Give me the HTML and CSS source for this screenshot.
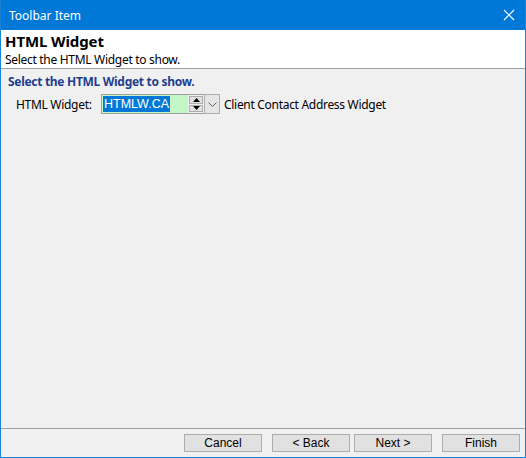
FILE: index.html
```html
<!DOCTYPE html>
<html lang="en">
<head>
    <meta charset="UTF-8">
    <title>Toolbar Item</title>
    <link rel="stylesheet" href="styles.css">
</head>
<body>
    <div class="window">
        <div class="titlebar">
            <span class="title">Toolbar Item</span>
            <svg class="close" width="12" height="12" viewBox="0 0 12 12">
                <path d="M1 1 L11 11 M11 1 L1 11" stroke="#fff" stroke-width="1.2" fill="none"/>
            </svg>
        </div>

        <div class="header">
            <h1>HTML Widget</h1>
            <p>Select the HTML Widget to show.</p>
        </div>

        <div class="content">
            <h2>Select the HTML Widget to show.</h2>
            <div class="field-row">
                <label>HTML Widget:</label>
                <div class="combo">
                    <div class="combo-input"><span class="selected">HTMLW.CA</span></div>
                    <div class="spinner">
                        <div class="spin-btn">
                            <svg width="7" height="4" viewBox="0 0 7 4"><path d="M3.5 0 L7 4 L0 4 Z" fill="#000"/></svg>
                        </div>
                        <div class="spin-btn">
                            <svg width="7" height="4" viewBox="0 0 7 4"><path d="M0 0 L7 0 L3.5 4 Z" fill="#000"/></svg>
                        </div>
                    </div>
                    <div class="drop-btn">
                        <svg width="9" height="5" viewBox="0 0 9 5"><path d="M0.5 0.5 L4.5 4.5 L8.5 0.5" stroke="#606060" fill="none"/></svg>
                    </div>
                </div>
                <span class="desc">Client Contact Address Widget</span>
            </div>
        </div>

        <div class="footer">
            <button>Cancel</button>
            <button class="gap">&lt; Back</button>
            <button>Next &gt;</button>
            <button class="gap">Finish</button>
        </div>
    </div>
</body>
</html>
```

FILE: styles.css
```css
* {
    box-sizing: border-box;
}

body {
    margin: 0;
    font-family: "Noto Sans", "Open Sans", sans-serif;
    font-size: 12px;
    color: #000;
}

.window {
    width: 526px;
    height: 458px;
    border: 1px solid #1883d7;
    display: flex;
    flex-direction: column;
    background: #f0f0f0;
}

.titlebar {
    height: 30px;
    flex-shrink: 0;
    margin-top: -1px;
    background: #0078d7;
    color: #fff;
    display: flex;
    align-items: center;
    justify-content: space-between;
    padding: 0 10px 0 8px;
}

.title {
    font-size: 12px;
}

.header {
    height: 39px;
    flex-shrink: 0;
    background: #fff;
    border-bottom: 1px solid #a0a0a0;
    padding-left: 4px;
}

.header h1 {
    margin: 2px 0 0 0;
    font-size: 15px;
    font-weight: bold;
    line-height: 18px;
    letter-spacing: -0.1px;
}

.header p {
    margin: 2px 0 0 0;
    font-size: 12px;
    line-height: 15px;
    letter-spacing: -0.3px;
}

.content {
    flex: 1;
    padding: 5px 0 0 7px;
}

.content h2 {
    margin: 0;
    font-size: 12px;
    font-weight: bold;
    color: #1f3d8f;
    line-height: 16px;
    letter-spacing: -0.3px;
}

.field-row {
    display: flex;
    align-items: center;
    margin-top: 4px;
    padding-left: 8px;
}

.field-row label {
    width: 85px;
    letter-spacing: -0.3px;
}

.combo {
    display: flex;
    height: 20px;
}

.combo-input {
    width: 87px;
    border: 1px solid #a0a0a0;
    border-right: none;
    background: #c4f5c4;
    display: flex;
    align-items: center;
    padding-left: 1px;
    font-family: "Liberation Sans", Arial, sans-serif;
    font-size: 12.5px;
}

.selected {
    background: #0078d7;
    color: #fff;
    line-height: 16px;
    padding: 0 1px;
}

.spinner {
    width: 16px;
    display: flex;
    flex-direction: column;
    border: 1px solid #a0a0a0;
    border-left: none;
    border-right: none;
    background: #f0f0f0;
    padding: 1px 1px;
    gap: 1px;
}

.spin-btn {
    flex: 1;
    background: #e1e1e1;
    border: 1px solid #adadad;
    display: flex;
    align-items: center;
    justify-content: center;
}

.drop-btn {
    width: 16px;
    border: 1px solid #adadad;
    background: #e5e5e5;
    display: flex;
    align-items: center;
    justify-content: center;
}

.desc {
    margin-left: 4px;
    letter-spacing: -0.3px;
}

.footer {
    height: 29px;
    flex-shrink: 0;
    border-top: 1px solid #a0a0a0;
    display: flex;
    justify-content: flex-end;
    align-items: flex-start;
    padding: 5px 5px 0 0;
}

.footer button {
    width: 78px;
    height: 18px;
    margin-left: 4px;
    padding: 0;
    border: 1px solid #adadad;
    background: #e1e1e1;
    font-family: "Liberation Sans", Arial, sans-serif;
    font-size: 12px;
    color: #000;
}

.footer button.gap {
    margin-left: 10px;
}
```
